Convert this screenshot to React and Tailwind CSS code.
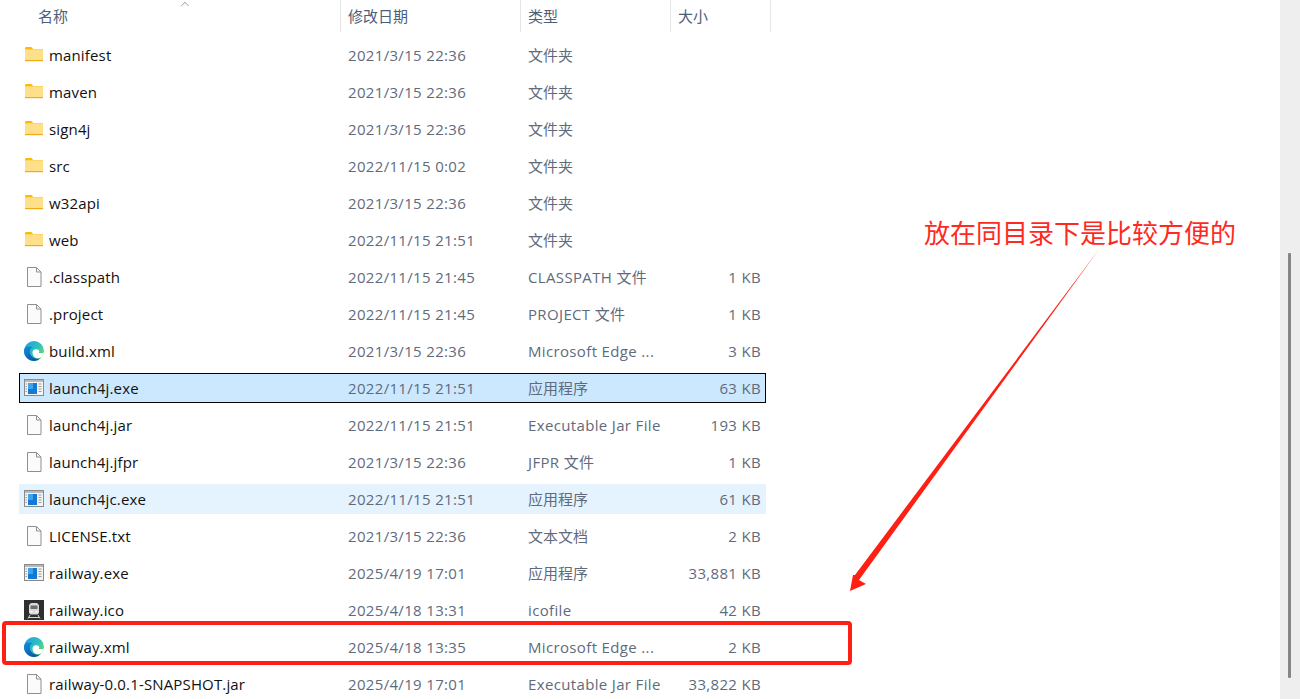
import { ChevronUp } from 'lucide-react';

const FolderIcon = () => (
  <svg width="20" height="20" viewBox="0 0 20 20">
    <path d="M1 3.500C1 2.700 1.600 2 2.400 2h5l2 2.200H1z" fill="#ffb900" />
    <rect x="1" y="4" width="18" height="12" fill="#ffe08a" />
    <rect x="1" y="4" width="18" height="1" fill="#ffd561" />
    <rect x="1" y="15" width="18" height="1.200" fill="#f0ac18" />
  </svg>
);

const FileIcon = () => (
  <svg width="20" height="22" viewBox="0 0 20 22">
    <path d="M3.500 1.500h9l4.500 4.500v14.500H3.500z" fill="#fbfbfb" stroke="#8f8f8f" />
    <path d="M12.500 1.500V6H17" fill="none" stroke="#8f8f8f" />
  </svg>
);

const EdgeIcon = ({ id }) => (
  <svg width="22" height="22" viewBox="0 0 22 22">
    <defs>
      <linearGradient id={`${id}a`} x1="0" y1="0" x2="1" y2="0.7">
        <stop offset="0" stopColor="#1b9de2" />
        <stop offset="0.6" stopColor="#2fc0c0" />
        <stop offset="1" stopColor="#6fdc5c" />
      </linearGradient>
      <linearGradient id={`${id}b`} x1="0" y1="0" x2="0.8" y2="1">
        <stop offset="0" stopColor="#0f8fe0" />
        <stop offset="1" stopColor="#0c4f9c" />
      </linearGradient>
    </defs>
    <circle cx="11" cy="11" r="10" fill={`url(#${id}a)`} />
    <path d="M1 11C1 6.500 6 5.500 9.500 7.500 6 8.500 6 13 8.500 16 11 19 15.500 19.500 18 17.500 16 20 13.500 21 11 21 5.500 21 1 16.500 1 11z" fill={`url(#${id}b)`} />
    <path d="M9.500 12.500C9.500 10 12 8.800 14.500 9.500 16.500 10.100 17 12 15.500 13l5.300 0c-.6 2-1.600 3.500-2.800 4.500-2.500 1.300-5 .8-6.500-.5-1.300-1.200-2-2.800-2-4.500z" fill="#ffffff" />
  </svg>
);

const ExeIcon = () => (
  <svg width="20" height="18" viewBox="0 0 20 18">
    <rect x="0.500" y="0.500" width="19" height="16" fill="#f4f4f4" stroke="#8a8a8a" />
    <rect x="1" y="1" width="18" height="2" fill="#b9b9b9" />
    <rect x="4" y="4" width="9" height="11" fill="#1579d3" />
    <rect x="4" y="4" width="5" height="6" fill="#3ea3ec" />
    <path d="M14.500 5h3M14.500 7.500h3M14.500 10h3M14.500 12.500h3M1.500 5h1.500M1.500 7.500h1.500M1.500 10h1.500M1.500 12.500h1.500" stroke="#9a9a9a" />
  </svg>
);

const TrainIcon = () => (
  <svg width="20" height="20" viewBox="0 0 20 20">
    <rect width="20" height="20" fill="#2f2f2f" />
    <path d="M7 3h6l2 2v8l-1.500 1.500h-7L5 13V5z" fill="#d9d9d9" />
    <rect x="6.500" y="5.500" width="7" height="3.500" fill="#6d6d6d" />
    <rect x="6.500" y="11" width="2" height="1.500" fill="#ffffff" />
    <rect x="11.500" y="11" width="2" height="1.500" fill="#ffffff" />
    <path d="M6 15l-2 3.500M14 15l2 3.500M5 17.500h10" stroke="#d9d9d9" strokeWidth="1" fill="none" />
  </svg>
);

const ICONS = {
  folder: <FolderIcon />,
  file: <FileIcon />,
  exe: <ExeIcon />,
  train: <TrainIcon />,
};

const FILES = [
  { name: 'manifest', date: '2021/3/15 22:36', type: '文件夹', icon: 'folder' },
  { name: 'maven', date: '2021/3/15 22:36', type: '文件夹', icon: 'folder' },
  { name: 'sign4j', date: '2021/3/15 22:36', type: '文件夹', icon: 'folder' },
  { name: 'src', date: '2022/11/15 0:02', type: '文件夹', icon: 'folder' },
  { name: 'w32api', date: '2021/3/15 22:36', type: '文件夹', icon: 'folder' },
  { name: 'web', date: '2022/11/15 21:51', type: '文件夹', icon: 'folder' },
  { name: '.classpath', date: '2022/11/15 21:45', type: 'CLASSPATH 文件', size: '1 KB', icon: 'file' },
  { name: '.project', date: '2022/11/15 21:45', type: 'PROJECT 文件', size: '1 KB', icon: 'file' },
  { name: 'build.xml', date: '2021/3/15 22:36', type: 'Microsoft Edge ...', size: '3 KB', icon: 'edge' },
  { name: 'launch4j.exe', date: '2022/11/15 21:51', type: '应用程序', size: '63 KB', icon: 'exe', state: 'selected' },
  { name: 'launch4j.jar', date: '2022/11/15 21:51', type: 'Executable Jar File', size: '193 KB', icon: 'file' },
  { name: 'launch4j.jfpr', date: '2021/3/15 22:36', type: 'JFPR 文件', size: '1 KB', icon: 'file' },
  { name: 'launch4jc.exe', date: '2022/11/15 21:51', type: '应用程序', size: '61 KB', icon: 'exe', state: 'hover' },
  { name: 'LICENSE.txt', date: '2021/3/15 22:36', type: '文本文档', size: '2 KB', icon: 'file' },
  { name: 'railway.exe', date: '2025/4/19 17:01', type: '应用程序', size: '33,881 KB', icon: 'exe' },
  { name: 'railway.ico', date: '2025/4/18 13:31', type: 'icofile', size: '42 KB', icon: 'train' },
  { name: 'railway.xml', date: '2025/4/18 13:35', type: 'Microsoft Edge ...', size: '2 KB', icon: 'edge' },
  { name: 'railway-0.0.1-SNAPSHOT.jar', date: '2025/4/19 17:01', type: 'Executable Jar File', size: '33,822 KB', icon: 'file' },
];

const HeaderCell = ({ label, width }) => (
  <div className={`${width} h-[32px] border-r border-[#e5e5e5] pl-[7px] pt-[6px] text-[#4c607a]`}>{label}</div>
);

const FileRow = ({ file, index }) => {
  const stateClass =
    file.state === 'selected'
      ? 'bg-[#cce8ff] outline outline-1 -outline-offset-1 outline-black'
      : file.state === 'hover'
        ? 'bg-[#e5f3ff]'
        : '';
  // latin text runs a little narrower here than in the picture, CJK doesn't
  const typeTracking = /^[\u4e00-\u9fff]/.test(file.type) ? '' : 'tracking-[0.35px]';
  return (
    <div className={`flex items-center h-[30px] w-[747px] shrink-0 ${stateClass}`}>
      <div className="w-[30px] h-[22px] shrink-0 flex items-center justify-center pr-[1px]">
        {file.icon === 'edge' ? <EdgeIcon id={`edge${index}`} /> : ICONS[file.icon]}
      </div>
      <div className="w-[299px] shrink-0 text-[#111111] whitespace-nowrap tracking-[0.15px]">{file.name}</div>
      <div className="w-[180px] shrink-0 text-[#5f6b7c] whitespace-nowrap tracking-[0.33px]">{file.date}</div>
      <div className={`w-[150px] shrink-0 text-[#5f6b7c] whitespace-nowrap ${typeTracking}`}>{file.type}</div>
      <div className="w-[88px] shrink-0 pr-[5px] text-right text-[#5f6b7c] whitespace-nowrap tracking-[0.33px]">{file.size}</div>
    </div>
  );
};

export default function App() {
  return (
    <div className="relative flex h-[699px] w-[1300px] overflow-hidden bg-white text-[15px] leading-[20px] font-['Open_Sans','Noto_Sans_CJK_SC',sans-serif]">
      <div className="flex-1 min-w-0">
        <div className="flex h-[40px] pl-[31px] items-start">
          <div className="relative w-[310px] h-[32px] border-r border-[#e5e5e5] pl-[7px] pt-[6px] text-[#4c607a]">
            名称
            <ChevronUp size={14} strokeWidth={1.2} className="absolute left-[147px] -top-[3px] text-[#6b6b6b]" />
          </div>
          <HeaderCell label="修改日期" width="w-[180px]" />
          <HeaderCell label="类型" width="w-[150px]" />
          <HeaderCell label="大小" width="w-[100px]" />
        </div>
        <div className="flex flex-col gap-[7px] pl-[19px]">
          {FILES.map((file, i) => (
            <FileRow key={file.name} file={file} index={i} />
          ))}
        </div>
      </div>

      {/* scrollbar */}
      <div className="w-[20px] shrink-0 bg-[#eeeeee] pt-[253px] pl-[8px]">
        <div className="w-[3px] h-[425px] bg-[#858585] rounded-[1px]" />
      </div>

      {/* annotations drawn on top of the screenshot */}
      <div className="absolute left-[924px] top-[215px] text-[26px] leading-[34px] text-[#ff2a1f] whitespace-nowrap font-['Noto_Sans_CJK_SC',sans-serif] font-normal">
        放在同目录下是比较方便的
      </div>
      <svg className="absolute left-0 top-0 pointer-events-none" width="1300" height="699">
        <path d="M1100 248 L859 580 L866 584 L850 591 L853 575 L855 575 Z" fill="#ff2015" />
      </svg>
      <div className="absolute left-[2px] top-[621px] w-[850px] h-[44px] border-[4px] border-[#ff2015] rounded-[4px]" />
    </div>
  );
}
